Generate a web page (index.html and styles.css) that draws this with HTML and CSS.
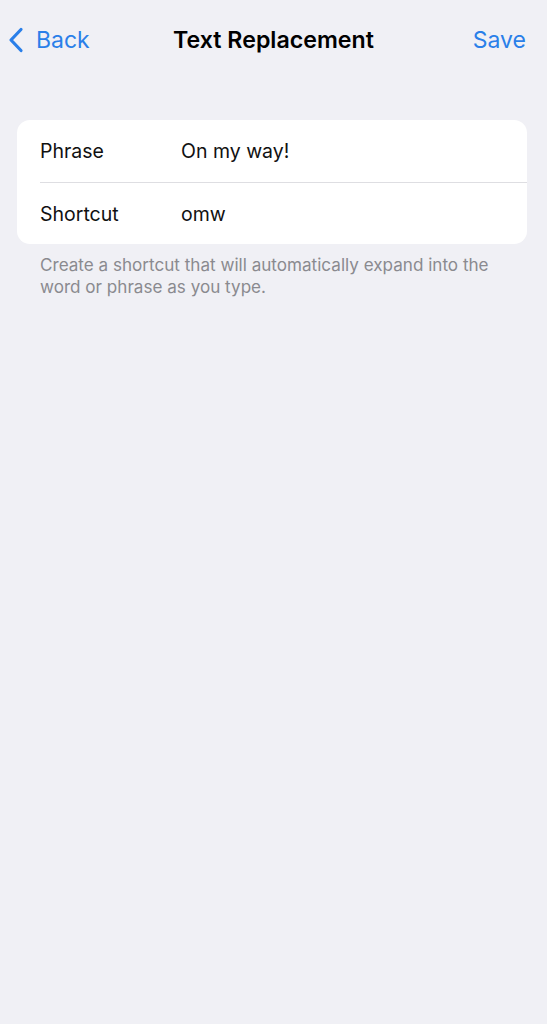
FILE: index.html
```html
<!DOCTYPE html>
<html lang="en">
<head>
<meta charset="utf-8">
<title>Text Replacement</title>
<link rel="stylesheet" href="styles.css">
</head>
<body>
<header class="nav">
  <a class="nav-back" href="#">
    <svg class="chevron" width="16" height="26" viewBox="0 0 16 26" aria-hidden="true">
      <path d="M13 2.5 L3 13 L13 23.5" fill="none" stroke="currentColor" stroke-width="3.2" stroke-linecap="round" stroke-linejoin="round"/>
    </svg>
    <span>Back</span>
  </a>
  <h1 class="nav-title">Text Replacement</h1>
  <a class="nav-save" href="#">Save</a>
</header>
<main class="content">
  <section class="card">
    <div class="row">
      <span class="row-label">Phrase</span>
      <span class="row-value">On my way!</span>
    </div>
    <div class="row">
      <span class="row-label">Shortcut</span>
      <span class="row-value">omw</span>
    </div>
  </section>
  <p class="footer">Create a shortcut that will automatically expand into the word or phrase as you type.</p>
</main>
</body>
</html>
```
FILE: styles.css
```css
* { box-sizing: border-box; }
html, body {
  margin: 0;
  padding: 0;
  height: 100%;
}
body {
  background: #f0f0f5;
  font-family: Inter, "Noto Sans", sans-serif;
  color: #000;
  -webkit-font-smoothing: antialiased;
}
.nav {
  display: grid;
  grid-template-columns: 1fr auto 1fr;
  align-items: center;
  height: 80px;
  padding: 0 21px;
}
.nav a {
  color: #2a7fe9;
  text-decoration: none;
  font-size: 23px;
  font-weight: 400;
}
.nav-back {
  display: flex;
  align-items: center;
  gap: 12px;
  justify-self: start;
  margin-left: -13px;
}
.chevron { display: block; }
.nav-title {
  margin: 0;
  font-size: 23.2px;
  font-weight: 600;
  letter-spacing: 0;
}
.nav-save { justify-self: end; }
.content {
  padding: 40px 20px 0 17px;
}
.card {
  background: #fff;
  border-radius: 13px;
  overflow: hidden;
}
.row {
  display: flex;
  align-items: center;
  height: 62px;
  margin-left: 23px;
  font-size: 19.5px;
}
.row + .row {
  border-top: 1px solid #dedee2;
}
.row-label {
  width: 141px;
  color: #111;
}
.row-value { color: #111; }
.footer {
  margin: 10px 0 0 23px;
  padding-right: 36px;
  font-size: 17.1px;
  line-height: 22px;
  color: #8a8a8f;
}
```
